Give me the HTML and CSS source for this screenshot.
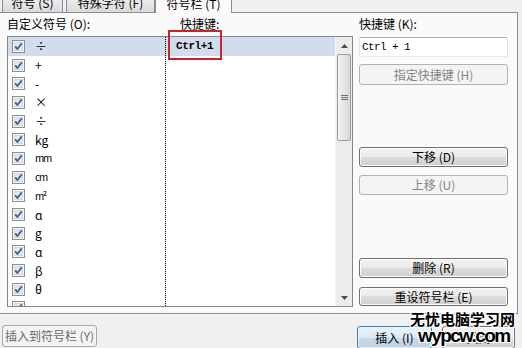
FILE: index.html
```html
<!DOCTYPE html>
<html lang="zh-CN">
<head>
<meta charset="utf-8">
<title>符号栏</title>
<link rel="stylesheet" href="styles.css">
</head>
<body>
<svg class="defs" width="0" height="0" aria-hidden="true">
  <symbol id="cb" viewBox="0 0 13 13">
    <rect x="0.5" y="0.5" width="12" height="12" fill="#f6f6f6" stroke="#8e8f8f"/>
    <rect x="2" y="2" width="9" height="9" fill="#d4d8de"/>
    <rect x="3" y="3" width="7" height="7" fill="#e6e8ec"/>
    <path d="M3.2 6.4 L5.4 9 L9.8 3.4" fill="none" stroke="#3b5b94" stroke-width="1.7"/>
  </symbol>
</svg>

<div class="tabs">
  <div class="tab tab1">符号 (S)</div>
  <div class="tab tab2">特殊字符 (F)</div>
  <div class="tab active">符号栏 (T)</div>
</div>

<div class="panel">
  <div class="left">
    <div class="labels">
      <span>自定义符号 (O):</span>
      <span>快捷键:</span>
    </div>
    <div class="list">
      <div class="rows">
        <div class="row sel"><div class="c1"><svg class="cb"><use href="#cb"/></svg><span>÷</span></div><div class="c2 mono">Ctrl+1</div></div>
        <div class="row"><div class="c1"><svg class="cb"><use href="#cb"/></svg><span>+</span></div><div class="c2"></div></div>
        <div class="row"><div class="c1"><svg class="cb"><use href="#cb"/></svg><span>-</span></div><div class="c2"></div></div>
        <div class="row"><div class="c1"><svg class="cb"><use href="#cb"/></svg><span>×</span></div><div class="c2"></div></div>
        <div class="row"><div class="c1"><svg class="cb"><use href="#cb"/></svg><span>÷</span></div><div class="c2"></div></div>
        <div class="row"><div class="c1"><svg class="cb"><use href="#cb"/></svg><span>kg</span></div><div class="c2"></div></div>
        <div class="row"><div class="c1"><svg class="cb"><use href="#cb"/></svg><span class="unit">mm</span></div><div class="c2"></div></div>
        <div class="row"><div class="c1"><svg class="cb"><use href="#cb"/></svg><span class="unit">cm</span></div><div class="c2"></div></div>
        <div class="row"><div class="c1"><svg class="cb"><use href="#cb"/></svg><span class="unit">m²</span></div><div class="c2"></div></div>
        <div class="row"><div class="c1"><svg class="cb"><use href="#cb"/></svg><span>ɑ</span></div><div class="c2"></div></div>
        <div class="row"><div class="c1"><svg class="cb"><use href="#cb"/></svg><span>g</span></div><div class="c2"></div></div>
        <div class="row"><div class="c1"><svg class="cb"><use href="#cb"/></svg><span>ɑ</span></div><div class="c2"></div></div>
        <div class="row"><div class="c1"><svg class="cb"><use href="#cb"/></svg><span>β</span></div><div class="c2"></div></div>
        <div class="row"><div class="c1"><svg class="cb"><use href="#cb"/></svg><span>θ</span></div><div class="c2"></div></div>
        <div class="row"><div class="c1"><svg class="cb"><use href="#cb"/></svg><span>μ</span></div><div class="c2"></div></div>
      </div>
      <div class="sb">
        <div class="sb-btn"><svg width="7" height="4" viewBox="0 0 7 4"><path d="M0 4 L3.5 0 L7 4 Z" fill="#4a4a4a"/></svg></div>
        <div class="thumb"><svg width="7" height="7" viewBox="0 0 7 7"><path d="M0 1.5 H7 M0 3.5 H7 M0 5.5 H7" stroke="#6f6f6f" stroke-width="1"/></svg></div>
        <div class="track"></div>
        <div class="sb-btn"><svg width="7" height="4" viewBox="0 0 7 4"><path d="M0 0 L3.5 4 L7 0 Z" fill="#4a4a4a"/></svg></div>
      </div>
    </div>
  </div>

  <div class="right">
    <span>快捷键 (K):</span>
    <div class="tb mono">Ctrl + 1</div>
    <button class="btn dis b-assign">指定快捷键 (H)</button>
    <button class="btn b-down">下移 (D)</button>
    <button class="btn dis b-up">上移 (U)</button>
    <button class="btn b-del">删除 (R)</button>
    <button class="btn b-reset">重设符号栏 (E)</button>
  </div>
</div>

<div class="bottom">
  <button class="btn dis2 b-insbar">插入到符号栏 (Y)</button>
  <button class="btn def b-ins">插入 (I)</button>
  <button class="btn b-close">关闭</button>
</div>

<div class="mark"></div>

<div class="wm">
  <div class="wm1">无忧电脑学习网</div>
  <div class="wm2">wypcw.com</div>
</div>
</body>
</html>
```

FILE: styles.css
```css
html, body {
  margin: 0;
  padding: 0;
}

body {
  width: 522px;
  height: 348px;
  overflow: hidden;
  position: relative;
  background: #f0f0f0;
  color: #000;
  font-family: "Noto Sans CJK SC", "Liberation Sans", sans-serif;
  font-size: 12px;
  line-height: 14px;
}

.defs {
  position: absolute;
  width: 0;
  height: 0;
}

/* tabs */
.tabs {
  display: flex;
  align-items: flex-end;
  height: 22px;
  margin-top: -10px;
  padding-left: 2px;
}

.tab {
  box-sizing: border-box;
  height: 20px;
  border: 1px solid #898c95;
  border-bottom: none;
  background: linear-gradient(#f3f3f3, #e8e8e8 50%, #dadada);
  padding-top: 3px;
  text-align: center;
  white-space: nowrap;
}

.tab1 { width: 61px; }
.tab2 { width: 89px; margin-left: 3px; }

.tab.active {
  width: 77px;
  height: 23px;
  margin-bottom: -1px;
  padding-top: 6px;
  background: #fafafa;
  position: relative;
  z-index: 1;
}

/* panel */
.panel {
  box-sizing: border-box;
  margin-left: -1px;
  width: 519px;
  height: 302px;
  border: 1px solid #898c95;
  background: #fafafa;
  display: flex;
  padding-top: 4px;
}

.left {
  margin-left: 7px;
  width: 346px;
}

.labels {
  display: grid;
  grid-template-columns: 173px auto;
  height: 14px;
}

.list {
  box-sizing: border-box;
  margin-top: 5px;
  height: 271px;
  border: 1px solid #828790;
  background: #fff;
  display: flex;
}

.rows {
  flex: 1;
  overflow: hidden;
  position: relative;
}

.rows::after {
  content: "";
  position: absolute;
  left: 157px;
  top: 0;
  bottom: 0;
  width: 1px;
  background: repeating-linear-gradient(#000 0 1px, transparent 1px 2px);
}

.row {
  display: grid;
  grid-template-columns: 157px 1fr;
  height: 18.7px;
}

.row.sel {
  background: #d3dcec;
}

.c1 {
  display: flex;
  align-items: center;
  padding-left: 4px;
}

.c1 span {
  margin-left: 10px;
}

.c1 .unit {
  font-size: 10px;
  letter-spacing: -1.2px;
}

.cb {
  width: 13px;
  height: 13px;
  flex: none;
}

.c2 {
  display: flex;
  align-items: center;
  padding-left: 11px;
}

.mono {
  font-family: "Liberation Mono", "DejaVu Sans Mono", monospace;
  font-size: 11px;
  font-weight: bold;
  letter-spacing: -0.4px;
}

/* scrollbar */
.sb {
  width: 17px;
  display: flex;
  flex-direction: column;
  background: #ececec;
  border-left: 1px solid #f4f4f4;
  box-sizing: border-box;
}

.sb-btn {
  height: 17px;
  display: flex;
  align-items: center;
  justify-content: center;
  flex: none;
}

.thumb {
  box-sizing: border-box;
  height: 87px;
  margin: 0 1px;
  border: 1px solid #9b9b9b;
  border-radius: 2px;
  background: linear-gradient(90deg, #f4f4f4, #e4e4e4 50%, #d8d8d8);
  display: flex;
  align-items: center;
  justify-content: center;
  flex: none;
}

.track {
  flex: 1;
}

/* right column */
.right {
  margin-left: 6px;
  width: 149px;
  display: flex;
  flex-direction: column;
}

.tb {
  box-sizing: border-box;
  margin-top: 6px;
  height: 20px;
  border: 1px solid #abadb3;
  border-color: #abadb3 #dbdfe6 #e3e9ef #e2e3ea;
  border-radius: 2px;
  background: #fff;
  padding-left: 2px;
  display: flex;
  align-items: center;
  font-weight: normal;
  letter-spacing: -0.6px;
}

.btn {
  box-sizing: border-box;
  margin: 0;
  padding: 0;
  border: 1px solid #707070;
  border-radius: 3px;
  background: linear-gradient(#f2f2f2 0%, #ebebeb 50%, #dddddd 50%, #cfcfcf 100%);
  box-shadow: inset 0 0 0 1px #fbfbfb;
  color: #000;
  font: inherit;
  display: flex;
  align-items: center;
  justify-content: center;
  white-space: nowrap;
}

.btn.dis {
  border-color: #adb2b5;
  background: #f4f4f4;
  box-shadow: none;
  color: #838383;
}

.btn.dis2 {
  border-color: #a6a9ac;
  background: #f4f4f4;
  box-shadow: none;
  color: #6a6a6a;
}

.btn.def {
  border-color: #3c7fb1;
  background: linear-gradient(#eaf3f9 0%, #dde9f3 50%, #c9dbe9 50%, #bcd1e2 100%);
  box-shadow: inset 0 0 0 1px #e6f2fa;
}

.b-assign { margin-top: 7px; height: 21px; }
.b-down { margin-top: 62px; height: 20px; }
.b-up { margin-top: 8px; height: 20px; }
.b-del { margin-top: 63px; height: 20px; }
.b-reset { margin-top: 9px; height: 19px; }

/* bottom */
.bottom {
  display: flex;
  padding: 11px 0 0 2px;
}

.b-insbar { width: 95px; height: 22px; }
.b-ins { width: 75px; height: 23px; margin-left: 260px; margin-top: 1px; }
.b-close { width: 73px; height: 23px; margin-left: 10px; margin-top: 1px; }

/* annotation */
.mark {
  position: absolute;
  left: 168px;
  top: 30px;
  width: 54px;
  height: 30px;
  box-sizing: border-box;
  border: 2px solid #c1272d;
}

/* watermark */
.wm {
  position: absolute;
  left: 410px;
  top: 311px;
  font-weight: bold;
  color: #000;
  text-shadow:
    1px 0 0 #fff, -1px 0 0 #fff, 0 1px 0 #fff, 0 -1px 0 #fff,
    1px 1px 0 #fff, -1px -1px 0 #fff, 1px -1px 0 #fff, -1px 1px 0 #fff;
}

.wm1 {
  font-size: 15px;
  line-height: 16px;
}

.wm2 {
  font-family: "Liberation Sans", sans-serif;
  font-size: 19px;
  line-height: 17px;
  margin-left: 8px;
  letter-spacing: -1.6px;
}
```
